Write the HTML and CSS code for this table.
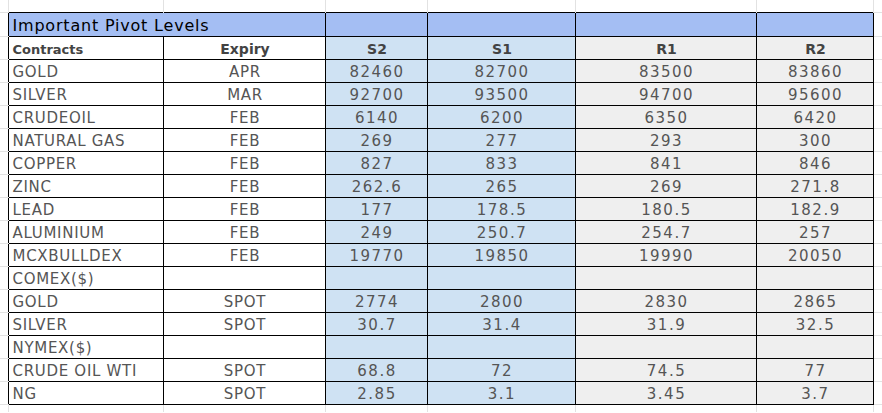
FILE: index.html
```html
<!DOCTYPE html>
<html>
<head>
<meta charset="utf-8">
<link rel="stylesheet" href="styles.css">
</head>
<body>
<table class="sheet">
  <colgroup>
    <col class="w-edge-l"><col class="w-a"><col class="w-b"><col class="w-c"><col class="w-d"><col class="w-e"><col class="w-f"><col class="w-edge-r">
  </colgroup>
  <tr class="strip-top">
    <td class="g gl"></td><td class="g"></td><td class="g"></td><td class="g"></td><td class="g"></td><td class="g"></td><td class="g"></td><td class="g gr"></td>
  </tr>
  <tr class="r-title">
    <td class="edge-l"></td>
    <td class="cell title" colspan="2">Important Pivot Levels</td>
    <td class="cell title"></td><td class="cell title"></td><td class="cell title"></td><td class="cell title"></td>
    <td class="edge-r"></td>
  </tr>
  <tr class="r">
    <td class="edge-l"></td>
    <td class="cell hd small">Contracts</td>
    <td class="cell hd c">Expiry</td>
    <td class="cell hd c s">S2</td>
    <td class="cell hd c s">S1</td>
    <td class="cell hd c r">R1</td>
    <td class="cell hd c r">R2</td>
    <td class="edge-r"></td>
  </tr>
  <tr class="r"><td class="edge-l"></td><td class="cell">GOLD</td><td class="cell c">APR</td><td class="cell c s n">82460</td><td class="cell c s n">82700</td><td class="cell c r n">83500</td><td class="cell c r n">83860</td><td class="edge-r"></td></tr>
  <tr class="r"><td class="edge-l"></td><td class="cell">SILVER</td><td class="cell c">MAR</td><td class="cell c s n">92700</td><td class="cell c s n">93500</td><td class="cell c r n">94700</td><td class="cell c r n">95600</td><td class="edge-r"></td></tr>
  <tr class="r"><td class="edge-l"></td><td class="cell">CRUDEOIL</td><td class="cell c">FEB</td><td class="cell c s n">6140</td><td class="cell c s n">6200</td><td class="cell c r n">6350</td><td class="cell c r n">6420</td><td class="edge-r"></td></tr>
  <tr class="r"><td class="edge-l"></td><td class="cell">NATURAL GAS</td><td class="cell c">FEB</td><td class="cell c s n">269</td><td class="cell c s n">277</td><td class="cell c r n">293</td><td class="cell c r n">300</td><td class="edge-r"></td></tr>
  <tr class="r"><td class="edge-l"></td><td class="cell">COPPER</td><td class="cell c">FEB</td><td class="cell c s n">827</td><td class="cell c s n">833</td><td class="cell c r n">841</td><td class="cell c r n">846</td><td class="edge-r"></td></tr>
  <tr class="r"><td class="edge-l"></td><td class="cell">ZINC</td><td class="cell c">FEB</td><td class="cell c s n">262.6</td><td class="cell c s n">265</td><td class="cell c r n">269</td><td class="cell c r n">271.8</td><td class="edge-r"></td></tr>
  <tr class="r"><td class="edge-l"></td><td class="cell">LEAD</td><td class="cell c">FEB</td><td class="cell c s n">177</td><td class="cell c s n">178.5</td><td class="cell c r n">180.5</td><td class="cell c r n">182.9</td><td class="edge-r"></td></tr>
  <tr class="r"><td class="edge-l"></td><td class="cell">ALUMINIUM</td><td class="cell c">FEB</td><td class="cell c s n">249</td><td class="cell c s n">250.7</td><td class="cell c r n">254.7</td><td class="cell c r n">257</td><td class="edge-r"></td></tr>
  <tr class="r"><td class="edge-l"></td><td class="cell">MCXBULLDEX</td><td class="cell c">FEB</td><td class="cell c s n">19770</td><td class="cell c s n">19850</td><td class="cell c r n">19990</td><td class="cell c r n">20050</td><td class="edge-r"></td></tr>
  <tr class="r"><td class="edge-l"></td><td class="cell">COMEX($)</td><td class="cell c"></td><td class="cell c s"></td><td class="cell c s"></td><td class="cell c r"></td><td class="cell c r"></td><td class="edge-r"></td></tr>
  <tr class="r"><td class="edge-l"></td><td class="cell">GOLD</td><td class="cell c">SPOT</td><td class="cell c s n">2774</td><td class="cell c s n">2800</td><td class="cell c r n">2830</td><td class="cell c r n">2865</td><td class="edge-r"></td></tr>
  <tr class="r"><td class="edge-l"></td><td class="cell">SILVER</td><td class="cell c">SPOT</td><td class="cell c s n">30.7</td><td class="cell c s n">31.4</td><td class="cell c r n">31.9</td><td class="cell c r n">32.5</td><td class="edge-r"></td></tr>
  <tr class="r"><td class="edge-l"></td><td class="cell">NYMEX($)</td><td class="cell c"></td><td class="cell c s"></td><td class="cell c s"></td><td class="cell c r"></td><td class="cell c r"></td><td class="edge-r"></td></tr>
  <tr class="r"><td class="edge-l"></td><td class="cell">CRUDE OIL WTI</td><td class="cell c">SPOT</td><td class="cell c s n">68.8</td><td class="cell c s n">72</td><td class="cell c r n">74.5</td><td class="cell c r n">77</td><td class="edge-r"></td></tr>
  <tr class="r"><td class="edge-l"></td><td class="cell">NG</td><td class="cell c">SPOT</td><td class="cell c s n">2.85</td><td class="cell c s n">3.1</td><td class="cell c r n">3.45</td><td class="cell c r n">3.7</td><td class="edge-r"></td></tr>
  <tr class="strip-bottom">
    <td class="g gl"></td><td class="g"></td><td class="g"></td><td class="g"></td><td class="g"></td><td class="g"></td><td class="g"></td><td class="g gr"></td>
  </tr>
</table>
</body>
</html>
```

FILE: styles.css
```css
html, body {
  margin: 0;
  padding: 0;
  background: #ffffff;
}

.sheet {
  border-collapse: collapse;
  table-layout: fixed;
  width: 882px;
  font-family: "DejaVu Sans", Verdana, sans-serif;
  font-size: 15px;
  line-height: 15px;
  color: #555555;
}

.w-edge-l { width: 8px; }
.w-a { width: 155px; }
.w-b { width: 162px; }
.w-c { width: 102px; }
.w-d { width: 148px; }
.w-e { width: 181px; }
.w-f { width: 117px; }
.w-edge-r { width: 9px; }

td {
  padding: 0;
  white-space: nowrap;
  overflow: hidden;
}

/* spreadsheet gridlines outside the table */
.strip-top td { height: 12px; }
.strip-bottom td { height: 7px; }

.g {
  border-left: 1px solid #e2e2e2;
  border-right: 1px solid #e2e2e2;
  border-top: none;
  border-bottom: none;
}
.gl { border-left: none; }
.gr { border-right: none; }

.edge-l,
.edge-r {
  border-top: 1px solid #e2e2e2;
  border-bottom: 1px solid #e2e2e2;
  border-left: none;
  border-right: none;
}

/* table cells */
.cell {
  border: 1px solid #000000;
  padding: 2px 2px 0 4px;
  vertical-align: middle;
  letter-spacing: 0.7px;
}

.r-title td { height: 21px; }
.r td { height: 20px; }

.title {
  background: #a4bef3;
  color: #000000;
  font-size: 16px;
  letter-spacing: 0.8px;
}

.hd {
  font-weight: 700;
  font-size: 14px;
  color: #434343;
  letter-spacing: 0;
}
.small { font-size: 13px; }

.c { text-align: center; }
.s { background: #cfe2f3; }
td.r { background: #efefef; }

.n { letter-spacing: 1.5px; }
```
